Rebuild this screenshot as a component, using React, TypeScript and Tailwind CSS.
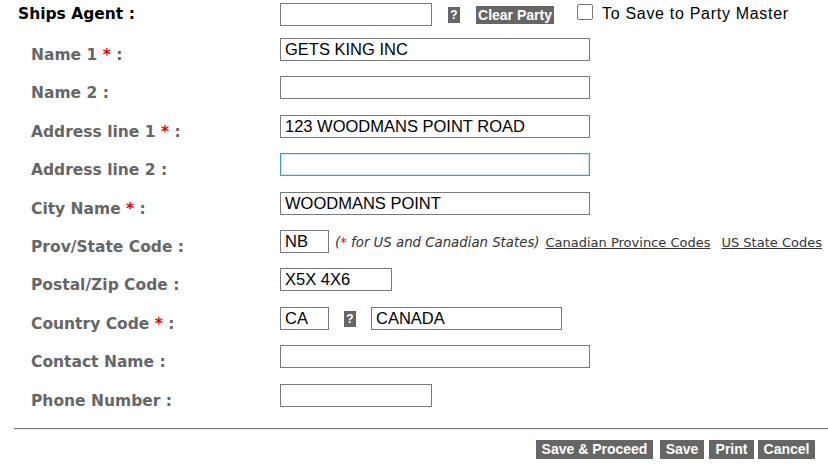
import React from "react";

const labelCls =
  "font-bold text-[15.5px] leading-[20px] text-[#666666] whitespace-nowrap";
const inputBase =
  "h-[23px] border border-[#7a7a7a] bg-white pl-[4px] text-[16.5px] leading-[21px] text-black outline-none";
const FONT_INPUT = { fontFamily: '"Liberation Sans", Arial, sans-serif' };

function Star() {
  return <span className="text-[#ee0000]"> *</span>;
}

function Field({ value, w, focused }: { value?: string; w: string; focused?: boolean }) {
  return (
    <div
      className={
        focused
          ? `h-[23px] border border-[#3d9ad6] shadow-[inset_0_0_0_1px_#cfe6f7] bg-white ${w}`
          : `${inputBase} ${w} truncate`
      }
      style={FONT_INPUT}
    >
      {value}
    </div>
  );
}

function Row({ label, req, children }: { label: string; req?: boolean; children: React.ReactNode }) {
  return (
    <div className="flex h-[38.4px] items-start">
      <div className={`w-[249px] shrink-0 mt-[7px] ${labelCls}`}>
        {label}
        {req && <Star />}
        {" :"}
      </div>
      <div className="flex items-start">{children}</div>
    </div>
  );
}

function Q({ mt }: { mt: string }) {
  return (
    <div
      className={`w-[12px] h-[16px] bg-[#666666] text-white font-bold text-[12px] leading-[16px] text-center ${mt}`}
      style={FONT_INPUT}
    >
      ?
    </div>
  );
}

export default function App() {
  return (
    <div className="w-[828px] h-[468px] bg-white overflow-hidden" style={{ fontFamily: '"DejaVu Sans", Verdana, sans-serif' }}>
      {/* Ships agent row */}
      <div className="flex h-[38px] items-start pt-[3px] pl-[18px]">
        <div className="w-[262px] shrink-0 mt-[1px] font-bold text-[15.5px] leading-[20px] text-black">
          Ships Agent :
        </div>
        <Field w="w-[152px]" />
        <div className="ml-[16px]">
          <Q mt="mt-[4px]" />
        </div>
        <div
          className="ml-[16px] mt-[3px] w-[78px] h-[18px] bg-[#666666] text-white font-bold text-[14px] leading-[18px] text-center whitespace-nowrap"
          style={FONT_INPUT}
        >
          Clear Party
        </div>
        <div className="ml-[23px] mt-[1px] w-[16px] h-[16px] border border-[#777777] rounded-[2px] bg-white" />
        <div
          className="ml-[9px] text-[16px] leading-[22px] tracking-[0.7px] text-black"
          style={FONT_INPUT}
        >
          To Save to Party Master
        </div>
      </div>

      <div className="pl-[31px]">
        <Row label="Name 1" req>
          <Field w="w-[310px]" value="GETS KING INC" />
        </Row>
        <Row label="Name 2">
          <Field w="w-[310px]" />
        </Row>
        <Row label="Address line 1" req>
          <Field w="w-[310px]" value="123 WOODMANS POINT ROAD" />
        </Row>
        <Row label="Address line 2">
          <Field w="w-[310px]" focused />
        </Row>
        <Row label="City Name" req>
          <Field w="w-[310px]" value="WOODMANS POINT" />
        </Row>
        <Row label="Prov/State Code">
          <Field w="w-[49px]" value="NB" />
          <div className="ml-[6px] mt-[4px] text-[13.3px] leading-[17px] italic text-[#333333] whitespace-nowrap">
            (<span className="text-[#ee0000]">*</span> for US and Canadian States)
          </div>
          <div className="ml-[6px] mt-[4px] text-[13px] leading-[17px] text-[#333333] underline whitespace-nowrap">
            Canadian Province Codes
          </div>
          <div className="ml-[11px] mt-[4px] text-[13px] leading-[17px] text-[#333333] underline whitespace-nowrap">
            US State Codes
          </div>
        </Row>
        <Row label="Postal/Zip Code">
          <Field w="w-[112px]" value="X5X 4X6" />
        </Row>
        <Row label="Country Code" req>
          <Field w="w-[49px]" value="CA" />
          <div className="ml-[15px]">
            <Q mt="mt-[4px]" />
          </div>
          <div className="ml-[15px]">
            <Field w="w-[191px]" value="CANADA" />
          </div>
        </Row>
        <Row label="Contact Name">
          <Field w="w-[310px]" />
        </Row>
        <Row label="Phone Number">
          <Field w="w-[152px]" />
        </Row>
      </div>

      <div className="ml-[14px] mt-[6px] border-t border-[#777777] border-b-[#eeeeee] border-b h-[2px]" />

      <div className="flex justify-end pr-[13px] mt-[10px]" style={FONT_INPUT}>
        <div className="w-[117px] h-[19px] bg-[#666666] text-white font-bold text-[14px] leading-[19px] text-center whitespace-nowrap">
          Save &amp; Proceed
        </div>
        <div className="ml-[7px] w-[44px] h-[19px] bg-[#666666] text-white font-bold text-[14px] leading-[19px] text-center">
          Save
        </div>
        <div className="ml-[5px] w-[45px] h-[19px] bg-[#666666] text-white font-bold text-[14px] leading-[19px] text-center">
          Print
        </div>
        <div className="ml-[4px] w-[57px] h-[19px] bg-[#666666] text-white font-bold text-[14px] leading-[19px] text-center">
          Cancel
        </div>
      </div>
    </div>
  );
}
